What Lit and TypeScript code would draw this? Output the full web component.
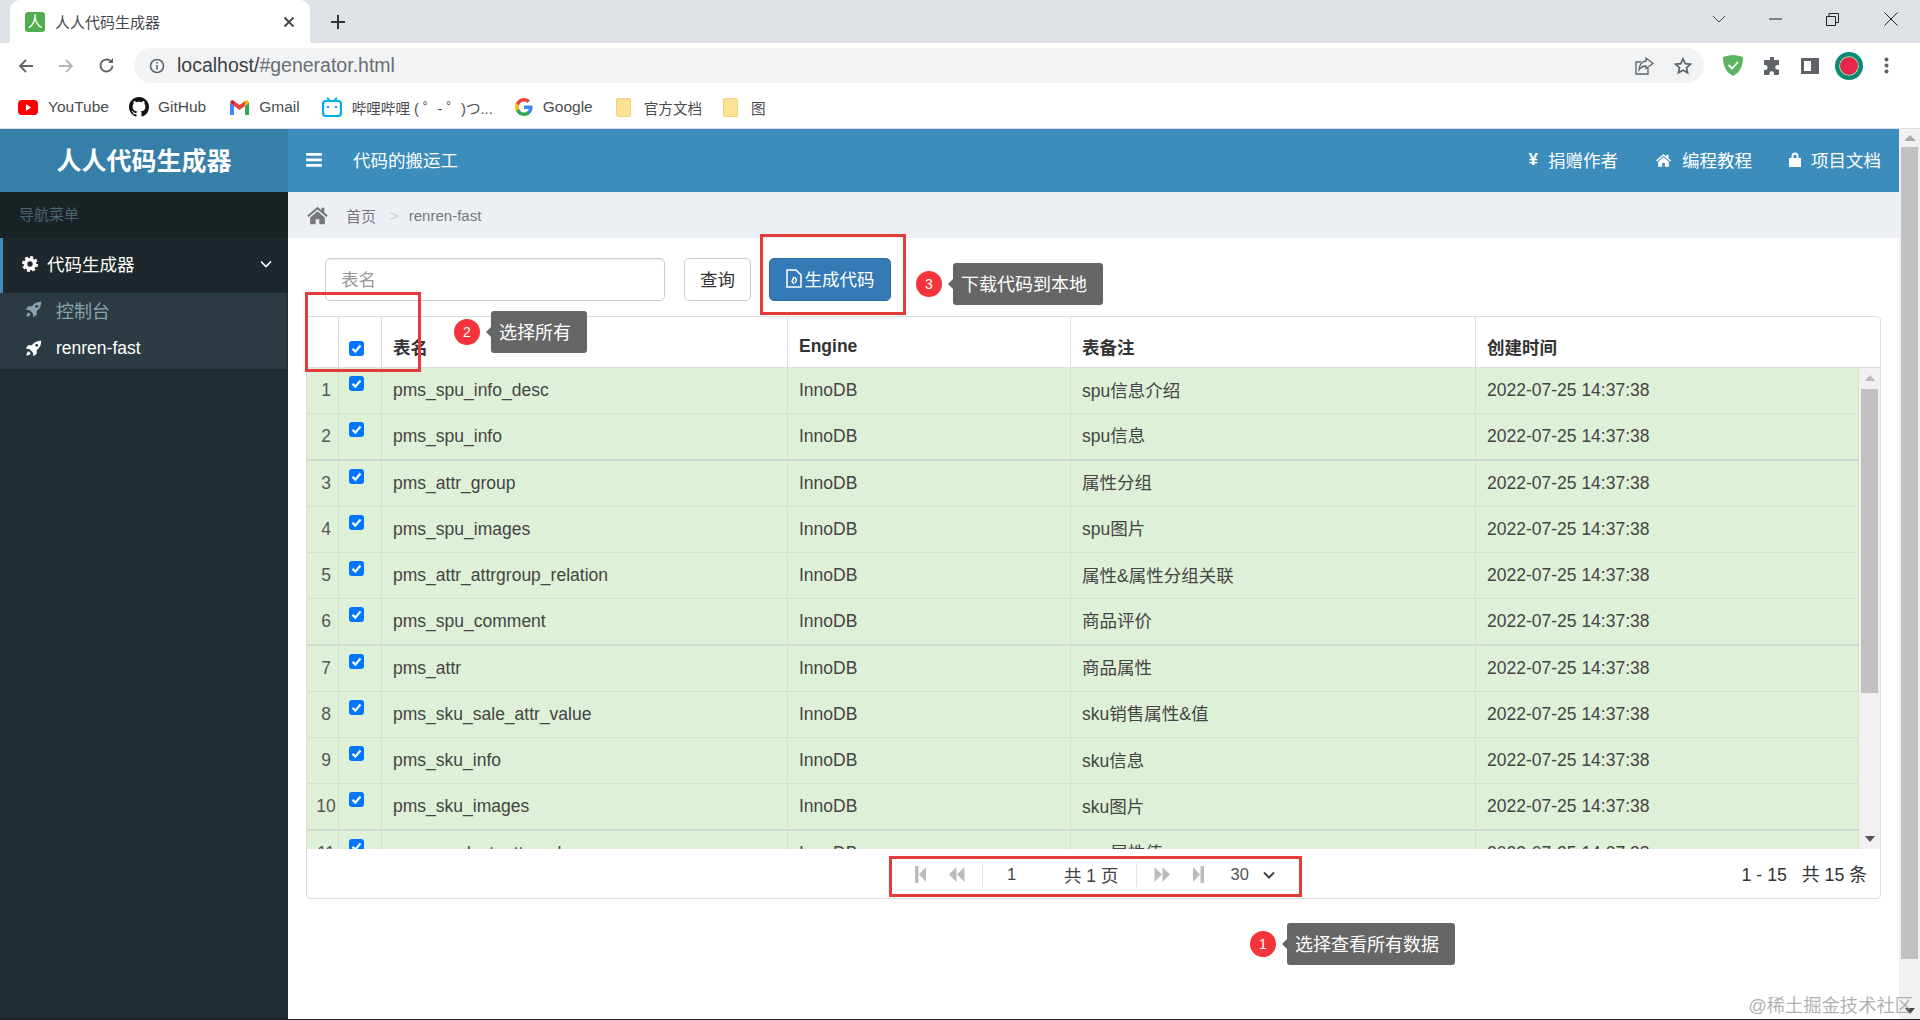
import { LitElement, html, css, svg } from "lit";
import { customElement } from "lit/decorators.js";

const rows: [string, string][] = [
  ["pms_spu_info_desc", "spu信息介绍"],
  ["pms_spu_info", "spu信息"],
  ["pms_attr_group", "属性分组"],
  ["pms_spu_images", "spu图片"],
  ["pms_attr_attrgroup_relation", "属性&属性分组关联"],
  ["pms_spu_comment", "商品评价"],
  ["pms_attr", "商品属性"],
  ["pms_sku_sale_attr_value", "sku销售属性&值"],
  ["pms_sku_info", "sku信息"],
  ["pms_sku_images", "sku图片"],
  ["pms_product_attr_value", "spu属性值"],
];

const rocket = svg`<path d="M23 1c-5.500 0-10 2-13.500 6.500H4.500L1 12l5.500 1 4.500 4.500 1 5.500 4.500-3.500v-5C21 11 23 6.500 23 1z"/><circle cx="16.500" cy="7.500" r="2" fill="var(--hole,#2c3b41)"/><path d="M5 16c-2 1-3 4-3 6 2 0 5-1 6-3z"/>`;
const home = svg`<path d="M12 3 .8 12.600l1.400 1.700L12 6l9.800 8.300 1.400-1.700L19.500 9.400V4h-3.200v2.700zM12 8 4 14.700V22h6v-5.500h4V22h6v-7.300z"/>`;

@customElement("app-root")
export class AppRoot extends LitElement {
  static styles = css`
    :host { display: block; position: relative; width: 1920px; height: 1020px; overflow: hidden; background: #fff;
      font-family: "Liberation Sans", "Noto Sans CJK SC", sans-serif; color: #333; }
    svg { display: block; flex: none; }
    .page { display: flex; flex-direction: column; height: 1019px; border-bottom: 1px solid #222; }

    .strip { height: 43px; background: #dee1e6; display: flex; align-items: flex-end; padding-left: 10px; position: relative; flex: none; }
    .tab { width: 300px; height: 43px; background: #fff; border-radius: 10px 10px 0 0; display: flex; align-items: center; padding: 0 15px; box-sizing: border-box; font-size: 14px; color: #45494d; }
    .fav { width: 20px; height: 20px; border-radius: 3px; background: #4fae4e; color: #fff; font-size: 15px; line-height: 19px; text-align: center; margin-right: 10px; flex: none; }
    .tab .ttl { flex: 1; font-size: 15px; }
    .plus { margin-left: 20px; }
    .winbtns { margin-left: auto; display: flex; align-items: center; height: 38px; align-self: flex-start; }
    .winbtns svg { margin-left: 43px; }
    .winbtns svg.res { margin-left: 44px; }
    .winbtns svg:last-child { margin-right: 22px; margin-left: 45px; }

    .toolbar { height: 45px; display: flex; align-items: center; flex: none; padding-left: 18px; background: #fff; box-sizing: border-box; }
    .toolbar .nav { margin-right: 24px; }
    .omni { width: 1570px; margin-left: -5px; height: 35px; border-radius: 18px; background: #f1f3f4; display: flex; align-items: center; padding: 0 12px 0 15px; box-sizing: border-box; font-size: 19.500px; }
    .omni .host { color: #3c4043; margin-left: 12px; }
    .omni .rest { color: #6a6e73; }
    .omni .sp { flex: 1; }
    .omni svg + svg { margin-left: 20px; }
    .ext { display: flex; align-items: center; margin-left: 19px; gap: 20px; }
    .avatar { width: 28px; height: 28px; border-radius: 50%; background: #e8274b; border: 4px solid #0d8a74; box-sizing: border-box; box-shadow: inset 0 0 0 1px #7fc; margin-left: -4px; }
    .dots { margin-left: 1px; }

    .bookmarks { height: 41px; flex: none; display: flex; align-items: center; padding: 0 0 2px 18px; font-size: 15.500px; color: #4a4d50; box-sizing: border-box; border-bottom: 1px solid #dadce0; }
    .bm { display: flex; align-items: center; gap: 10px; margin-right: 22px; white-space: nowrap; }
    .bm.tight { margin-right: 20px; }
    .bm.gh { margin-right: 24px; gap: 9px; }
    .bm.goog { margin-right: 23px; }
    .bm.small { font-size: 14.600px; }
    .bm.wide { gap: 13px; margin-right: 21px; }
    .folder { width: 15px; height: 19px; background: #fde293; border: 1px solid #f0d078; box-sizing: border-box; border-radius: 2px; }

    .app { flex: 1; display: flex; min-height: 0; }
    .sidebar { width: 288px; flex: none; background: #222d32; color: #b8c7ce; }
    .logo { height: 63px; background: #367fa9; color: #fff; font-weight: 700; font-size: 25px; display: flex; align-items: center; justify-content: center; padding-bottom: 4px; box-sizing: border-box; }
    .navhead { height: 46px; background: #1a2226; color: #4b646f; font-size: 15px; display: flex; align-items: center; padding: 0 0 4px 19px; box-sizing: border-box; }
    .menu { height: 55px; background: #1e282c; border-left: 3px solid #3c8dbc; color: #fff; display: flex; align-items: center; padding: 0 0 4px 19px; box-sizing: border-box; font-size: 17.500px; gap: 9px; }
    .menu .chev { margin-left: auto; margin-right: 16px; }
    .sub { background: #2c3b41; height: 76px; padding: 0 0 0 25px; margin-right: 1px; }
    .subitem { height: 38px; display: flex; align-items: center; gap: 14px; padding-bottom: 5px; box-sizing: border-box; font-size: 18px; color: #8aa4af; fill: #8aa4af; }
    .subitem.on { color: #fff; fill: #fff; font-size: 17.500px; padding-bottom: 3px; }

    .main { flex: 1; min-width: 0; display: flex; flex-direction: column; }
    .topbar { height: 63px; background: #3c8dbc; color: #fff; display: flex; align-items: center; padding: 0 18px 2px; font-size: 17.500px; flex: none; box-sizing: border-box; }
    .topbar .brand { margin-left: 31px; }
    .topbar .right { margin-left: auto; display: flex; align-items: center; gap: 37px; }
    .link { display: flex; align-items: center; gap: 10px; fill: #fff; }
    .crumb { height: 46px; background: #ecf0f5; display: flex; align-items: center; padding-left: 18px; font-size: 15px; color: #777; flex: none; }
    .crumb .home-t { margin-left: 17px; }
    .crumb .sep { margin: 0 10px 0 14px; color: #ccc; }
    .content { padding: 20px 18px 0; flex: 1; }
    .form { display: flex; height: 43px; margin-left: 19px; gap: 19px; margin-bottom: 15px; }
    .input { width: 340px; height: 43px; box-sizing: border-box; border: 1px solid #ccc; border-radius: 5px; padding: 0 0 2px 15px; display: flex; align-items: center; color: #999; font-size: 17.500px; box-shadow: inset 0 1px 1px rgba(0,0,0,.075); }
    .btn { height: 43px; box-sizing: border-box; border: 1px solid #ccc; border-radius: 5px; display: flex; align-items: center; justify-content: center; padding-bottom: 2px; font-size: 17.500px; width: 67px; background: #fff; }
    .btn.primary { width: 122px; background: #337ab7; border-color: #2e6da4; color: #fff; margin-left: -1px; gap: 3px; }

    .grid { width: 1575px; height: 583px; box-sizing: border-box; border: 1px solid #ddd; border-radius: 4px; display: flex; flex-direction: column; overflow: hidden; }
    .hrow, .row { display: grid; grid-template-columns: 32px 43px 406px 283px 405px 1fr; }
    .hrow { height: 51px; flex: none; border-bottom: 1px solid #ddd; font-weight: 700; font-size: 17.500px; box-sizing: border-box; }
    .hrow > div { display: flex; align-items: center; padding: 9px 0 0 11px; border-right: 1px solid #ddd; }
    .hrow > div:last-child { border-right: none; }
    .hrow > .ck { padding: 12px 8px 0 0; justify-content: center; }
    .bodywrap { height: 481px; display: flex; overflow: hidden; flex: none; }
    .body { width: 1552px; flex: none; }
    .row { height: 46.270px; background: #dff0d8; font-size: 17.500px; color: #444; box-sizing: border-box; border-bottom: 1px solid #d3e0cd; }
    .row:nth-child(4n + 2) { border-bottom: 2px solid #d2d9d0; }
    .row > div { display: flex; align-items: center; padding-left: 11px; border-right: 1px solid #d3e0cd; white-space: nowrap; overflow: hidden; }
    .row > .num { justify-content: center; padding: 0 0 0 7px; color: #555; }
    .row > .ck { align-items: flex-start; justify-content: center; padding: 8px 8px 0 0; }
    .row > .cn { padding-bottom: 3px; box-sizing: border-box; }
    .cb { width: 15px; height: 15px; border-radius: 3px; background: #0075ff; display: flex; align-items: center; justify-content: center; }
    .vbar { flex: 1; background: #f1f1f1; position: relative; display: flex; flex-direction: column; align-items: center; padding: 7px 0; box-sizing: border-box; }
    .vthumb { width: 17px; height: 304px; background: #c1c1c1; margin-top: 8px; }
    .vbar .down { margin-top: auto; }

    .foot { flex: 1; display: flex; align-items: center; position: relative; }
    .pager { position: absolute; left: 608px; top: 12px; height: 27px; display: flex; align-items: center; color: #444; }
    .pager .sepv { width: 1px; height: 24px; background: #e4e4e4; }
    .pg1 { width: 49px; margin: 0 0 0 24px; color: #444; font-size: 16.500px; }
    .pgt { margin: 0 18px 0 8px; font-size: 17.500px; white-space: nowrap; }
    .sel { margin-left: 26px; display: flex; align-items: center; gap: 14px; font-size: 16.500px; width: 64px; color: #555; }
    .info { margin-left: auto; margin-right: 13px; padding-bottom: 2px; font-size: 17.800px; white-space: pre; }

    .pagebar { width: 21px; flex: none; background: #f1f1f1; display: flex; flex-direction: column; align-items: center; padding-top: 6px; box-sizing: border-box; position: relative; }
    .pthumb { width: 17px; height: 812px; background: #c1c1c1; margin-top: 6px; }
    .pagebar .dn { margin-top: auto; margin-bottom: 5px; }

    .box { position: absolute; border: 3px solid #e53b3b; box-sizing: border-box; pointer-events: none; }
    .b1 { left: 889px; top: 856px; width: 413px; height: 41px; }
    .b2 { left: 305px; top: 292px; width: 116px; height: 80px; }
    .b3 { left: 760px; top: 234px; width: 146px; height: 81px; }
    .dot { position: absolute; width: 26px; height: 26px; border-radius: 50%; background: #f5333a; color: #fff; font-size: 14px; display: flex; align-items: center; justify-content: center; }
    .tip { position: absolute; height: 42px; background: #666; color: #fff; border-radius: 3px; font-size: 18px; display: flex; align-items: center; padding-left: 8px; padding-bottom: 2px; box-sizing: border-box; }
    .tip::before { content: ""; position: absolute; left: -5px; top: 16px; border: 5px solid transparent; border-left: 0; border-right-color: #666; }
    .d1 { left: 1250px; top: 931px; } .t1 { left: 1287px; top: 923px; width: 168px; }
    .d2 { left: 454px; top: 319px; } .t2 { left: 491px; top: 311px; width: 96px; }
    .d3 { left: 916px; top: 271px; } .t3 { left: 953px; top: 263px; width: 150px; }
    .mark { position: absolute; right: 7px; top: 991px; font-size: 18.300px; color: rgba(150,150,150,.75); }
  `;

  private pgIcon(w: number, paths: string[]) {
    return html`<svg width=${w} height="17" viewBox="0 0 ${w} 17" fill="#bbb">${paths.map((d) => svg`<path d=${d} />`)}</svg>`;
  }

  private check() {
    return html`<div class="cb"><svg width="13" height="13" viewBox="0 0 13 13" fill="none" stroke="#fff" stroke-width="2.200"><path d="M2.500 6.800 5.300 9.600 10.500 3.500"/></svg></div>`;
  }

  render() {
    return html`
      <div class="page">
        <div class="strip">
          <div class="tab">
            <div class="fav">人</div>
            <span class="ttl">人人代码生成器</span>
            <svg width="12" height="12" viewBox="0 0 12 12" stroke="#444" stroke-width="1.800"><path d="M1.500 1.500l9 9M10.500 1.500l-9 9"/></svg>
          </div>
          <svg class="plus" width="16" height="16" viewBox="0 0 16 16" stroke="#333" stroke-width="2" style="align-self:center"><path d="M8 1v14M1 8h14"/></svg>
          <div class="winbtns">
            <svg width="14" height="10" viewBox="0 0 14 10" fill="none" stroke="#444"><path d="M1 2l6 6 6-6"/></svg>
            <svg width="13" height="2" viewBox="0 0 13 2" stroke="#222"><path d="M0 1h13"/></svg>
            <svg class="res" width="13" height="13" viewBox="0 0 13 13" fill="none" stroke="#222"><path d="M.5 3.500h9v9h-9zM3 3.500V.5h9.500v9h-3"/></svg>
            <svg width="14" height="14" viewBox="0 0 14 14" stroke="#222"><path d="M.5.5l13 13M13.500.5l-13 13"/></svg>
          </div>
        </div>

        <div class="toolbar">
          <svg class="nav" width="16" height="16" viewBox="0 0 16 16" fill="none" stroke="#5f6368" stroke-width="1.800"><path d="M15 8H2M8 2 2 8l6 6"/></svg>
          <svg class="nav" width="16" height="16" viewBox="0 0 16 16" fill="none" stroke="#b5b8bb" stroke-width="1.800"><path d="M1 8h13M8 2l6 6-6 6"/></svg>
          <svg class="nav" width="17" height="17" viewBox="0 0 17 17" fill="none" stroke="#5f6368" stroke-width="1.800"><path d="M14.500 8.500a6 6 0 1 1-1.800-4.300"/><path d="M15 1v5h-5" fill="#5f6368" stroke="none"/></svg>
          <div class="omni">
            <svg width="16" height="16" viewBox="0 0 16 16" fill="none" stroke="#5f6368" stroke-width="1.600"><circle cx="8" cy="8" r="6.500"/><path d="M8 7v4.500M8 4v1.600"/></svg>
            <span class="host">localhost/</span><span class="rest">#generator.html</span>
            <span class="sp"></span>
            <svg width="19" height="18" viewBox="0 0 19 18" fill="none" stroke="#5f6368" stroke-width="1.300"><path d="M13 11v6H1V5h5"/><path d="M11 1l7 5.500-7 5V9C8 9 5.500 10.500 4 13c0-5 3-8.500 7-9z"/></svg>
            <svg width="18" height="18" viewBox="0 0 18 18" fill="none" stroke="#5f6368" stroke-width="1.700"><path d="M9 1.800l2.200 4.800 5.200.6-3.900 3.500 1.100 5.100L9 13.200l-4.600 2.600 1.100-5.100L1.600 7.200l5.200-.6z"/></svg>
          </div>
          <div class="ext">
            <svg width="20" height="21" viewBox="0 0 20 21"><path d="M10 0c3 0 7 1 10 2 0 8-2 15-10 19C2 17 0 10 0 2c3-1 7-2 10-2z" fill="#5db562"/><path d="M5.500 10l3.500 3.500 6-6.500" fill="none" stroke="#fff" stroke-width="1.800"/></svg>
            <svg width="18" height="18" viewBox="0 0 18 18" fill="#5f6368"><path d="M7 1a2 2 0 0 1 4 0v2h4a1 1 0 0 1 1 1v4h-1.500a2.300 2.300 0 0 0 0 4.600H16V17a1 1 0 0 1-1 1h-4v-1.500a2.300 2.300 0 0 0-4.600 0V18H2a1 1 0 0 1-1-1v-4h1a2.500 2.500 0 0 0 0-5H1V4a1 1 0 0 1 1-1h5z"/></svg>
            <svg width="18" height="16" viewBox="0 0 18 16"><path d="M0 0h18v16H0z" fill="#5f6368"/><path d="M3 3h7v10H3z" fill="#fff"/></svg>
            <div class="avatar"></div>
            <svg class="dots" width="5" height="17" viewBox="0 0 5 17" fill="#5f6368"><circle cx="2.500" cy="2.500" r="2"/><circle cx="2.500" cy="8.500" r="2"/><circle cx="2.500" cy="14.500" r="2"/></svg>
          </div>
        </div>

        <div class="bookmarks">
          <div class="bm tight"><svg width="20" height="15" viewBox="0 0 20 15"><rect width="20" height="15" rx="4" fill="#f00"/><path d="M8 4l5 3.500L8 11z" fill="#fff"/></svg>YouTube</div>
          <div class="bm gh"><svg width="20" height="20" viewBox="0 0 16 16" fill="#111"><path d="M8 0C3.580 0 0 3.580 0 8c0 3.540 2.290 6.530 5.470 7.590.4.070.55-.17.55-.38 0-.19-.01-.82-.01-1.490-2.010.37-2.530-.49-2.690-.94-.09-.23-.48-.94-.82-1.130-.28-.15-.68-.52-.01-.53.630-.01 1.080.58 1.230.82.720 1.210 1.870.870 2.330.660.070-.520.280-.870.510-1.070-1.780-.2-3.640-.890-3.640-3.950 0-.870.310-1.590.820-2.150-.080-.2-.360-1.020.080-2.120 0 0 .670-.210 2.200.820.640-.180 1.320-.270 2-.270s1.360.090 2 .270c1.530-1.040 2.200-.820 2.200-.820.440 1.100.160 1.920.080 2.120.510.560.820 1.270.820 2.150 0 3.070-1.870 3.750-3.650 3.950.290.250.540.730.540 1.480 0 1.070-.010 1.930-.010 2.200 0 .210.150.460.550.380A8.010 8.010 0 0 0 16 8c0-4.420-3.580-8-8-8z"/></svg>GitHub</div>
          <div class="bm"><svg width="19" height="15" viewBox="0 0 19 15"><path d="M0 2v13h4V6z" fill="#4285f4"/><path d="M15 6v9h4V2z" fill="#34a853"/><path d="M15 1v5l-5.500 4L4 6V1l5.500 4z" fill="#ea4335"/><path d="M15 1l2-1 2 2-4 4z" fill="#fbbc04"/><path d="M0 2l2-2 2 1v5z" fill="#c5221f"/></svg>Gmail</div>
          <div class="bm small"><svg width="20" height="20" viewBox="0 0 20 20"><path d="M5 1l3 3M15 1l-3 3" stroke="#00aeec" stroke-width="2"/><rect x="1" y="4" width="18" height="15" rx="3" fill="none" stroke="#00aeec" stroke-width="2.200"/><path d="M6 9v2M14 9v2" stroke="#00aeec" stroke-width="2.200"/></svg>哔哩哔哩 ( ゜- ゜)つ...</div>
          <div class="bm goog"><svg width="18" height="18" viewBox="0 0 18 18"><path d="M17.600 9.200c0-.6-.1-1.200-.2-1.800H9v3.500h4.800a4.100 4.100 0 0 1-1.800 2.700v2.200h2.900c1.700-1.600 2.700-3.900 2.700-6.600z" fill="#4285f4"/><path d="M9 18c2.400 0 4.500-.8 5.900-2.200L12 13.600c-.8.500-1.800.9-3 .9-2.300 0-4.300-1.600-5-3.700H1v2.300A9 9 0 0 0 9 18z" fill="#34a853"/><path d="M4 10.700a5.400 5.400 0 0 1 0-3.400V5H1a9 9 0 0 0 0 8z" fill="#fbbc05"/><path d="M9 3.600c1.300 0 2.500.5 3.400 1.300L15 2.400A9 9 0 0 0 1 5l3 2.300c.7-2.100 2.700-3.700 5-3.700z" fill="#ea4335"/></svg>Google</div>
          <div class="bm small wide"><div class="folder"></div>官方文档</div>
          <div class="bm small wide"><div class="folder"></div>图</div>
        </div>

        <div class="app">
          <div class="sidebar">
            <div class="logo">人人代码生成器</div>
            <div class="navhead">导航菜单</div>
            <div class="menu">
              <svg width="16" height="16" viewBox="0 0 16 16" fill="none" stroke="#fff"><circle cx="8" cy="8" r="4.500" stroke-width="3.600"/><circle cx="8" cy="8" r="6.800" stroke-width="2.400" stroke-dasharray="3 2.340"/></svg>
              代码生成器
              <svg class="chev" width="12" height="8" viewBox="0 0 12 8" fill="none" stroke="#fff" stroke-width="1.600"><path d="M1 1.500l5 5 5-5"/></svg>
            </div>
            <div class="sub">
              <div class="subitem"><svg width="17" height="17" viewBox="0 0 24 24">${rocket}</svg>控制台</div>
              <div class="subitem on"><svg width="17" height="17" viewBox="0 0 24 24">${rocket}</svg>renren-fast</div>
            </div>
          </div>

          <div class="main">
            <div class="topbar">
              <svg width="16" height="14" viewBox="0 0 16 14" fill="#fff"><rect width="16" height="2.800" y="0" rx="1"/><rect width="16" height="2.800" y="5.500" rx="1"/><rect width="16" height="2.800" y="11" rx="1"/></svg>
              <span class="brand">代码的搬运工</span>
              <div class="right">
                <span class="link"><b style="font-size:17px">¥</b>捐赠作者</span>
                <span class="link"><svg width="17" height="16" viewBox="0 0 24 24">${home}</svg>编程教程</span>
                <span class="link"><svg width="12" height="15" viewBox="0 0 12 15"><path d="M2.500 6V4a3.500 3.500 0 0 1 7 0v2H12v9H0V6zm2 0h3V4a1.500 1.500 0 0 0-3 0z"/></svg>项目文档</span>
              </div>
            </div>
            <div class="crumb">
              <svg width="23" height="22" viewBox="0 0 24 24" fill="#777">${home}</svg>
              <span class="home-t">首页</span><span class="sep">&gt;</span><span>renren-fast</span>
            </div>
            <div class="content">
              <div class="form">
                <div class="input">表名</div>
                <div class="btn">查询</div>
                <div class="btn primary">
                  <svg width="16" height="19" viewBox="0 0 16 19" fill="none" stroke="#fff" stroke-width="1.500"><path d="M1 1h9l5 5v12H1z"/><path d="M8 8 6 12.500 8 15M9 8l1.500 3L9 14"/></svg>
                  生成代码
                </div>
              </div>
              <div class="grid">
                <div class="hrow">
                  <div></div>
                  <div class="ck">${this.check()}</div>
                  <div>表名</div><div>Engine</div><div>表备注</div><div>创建时间</div>
                </div>
                <div class="bodywrap">
                  <div class="body">
                    ${rows.map(([n, c], i) => html`
                      <div class="row">
                        <div class="num">${i + 1}</div>
                        <div class="ck">${this.check()}</div>
                        <div>${n}</div><div>InnoDB</div><div class="cn">${c}</div><div>2022-07-25 14:37:38</div>
                      </div>`)}
                  </div>
                  <div class="vbar">
                    <svg width="10" height="6" viewBox="0 0 10 6" fill="#bbb"><path d="M5 0l5 6H0z"/></svg>
                    <div class="vthumb"></div>
                    <svg class="down" width="10" height="6" viewBox="0 0 10 6" fill="#555"><path d="M0 0h10L5 6z"/></svg>
                  </div>
                </div>
                <div class="foot">
                  <div class="pager">
                    ${this.pgIcon(11, ["M0 0h3.500v17H0z", "M11 1v15L4 8.500z"])}
                    <span style="width:22px"></span>
                    ${this.pgIcon(17, ["M8.500 1v15L1 8.500z", "M16.500 1v15L9 8.500z"])}
                    <span style="width:17px"></span>
                    <div class="sepv"></div>
                    <div class="pg1">1</div>
                    <div class="pgt">共 1 页</div>
                    <div class="sepv"></div>
                    <span style="width:17px"></span>
                    ${this.pgIcon(17, ["M.5 1v15L8 8.500z", "M8.500 1v15L16 8.500z"])}
                    <span style="width:22px"></span>
                    ${this.pgIcon(11, ["M0 1v15l7-7.500z", "M7.500 0H11v17H7.500z"])}
                    <div class="sel">30
                      <svg width="12" height="8" viewBox="0 0 12 8" fill="none" stroke="#444" stroke-width="2"><path d="M1 1.500l5 5 5-5"/></svg>
                    </div>
                  </div>
                  <div class="info">1 - 15   共 15 条</div>
                </div>
              </div>
            </div>
          </div>

          <div class="pagebar">
            <svg width="12" height="6" viewBox="0 0 12 6" fill="#aaa"><path d="M6 0l6 6H0z"/></svg>
            <div class="pthumb"></div>
            <svg class="dn" width="10" height="6" viewBox="0 0 10 6" fill="#444"><path d="M0 0h10L5 6z"/></svg>
          </div>
        </div>
      </div>

      <div class="box b1"></div>
      <div class="box b2"></div>
      <div class="box b3"></div>
      <div class="dot d1">1</div><div class="tip t1">选择查看所有数据</div>
      <div class="dot d2">2</div><div class="tip t2">选择所有</div>
      <div class="dot d3">3</div><div class="tip t3">下载代码到本地</div>
      <div class="mark">@稀土掘金技术社区</div>
    `;
  }
}
